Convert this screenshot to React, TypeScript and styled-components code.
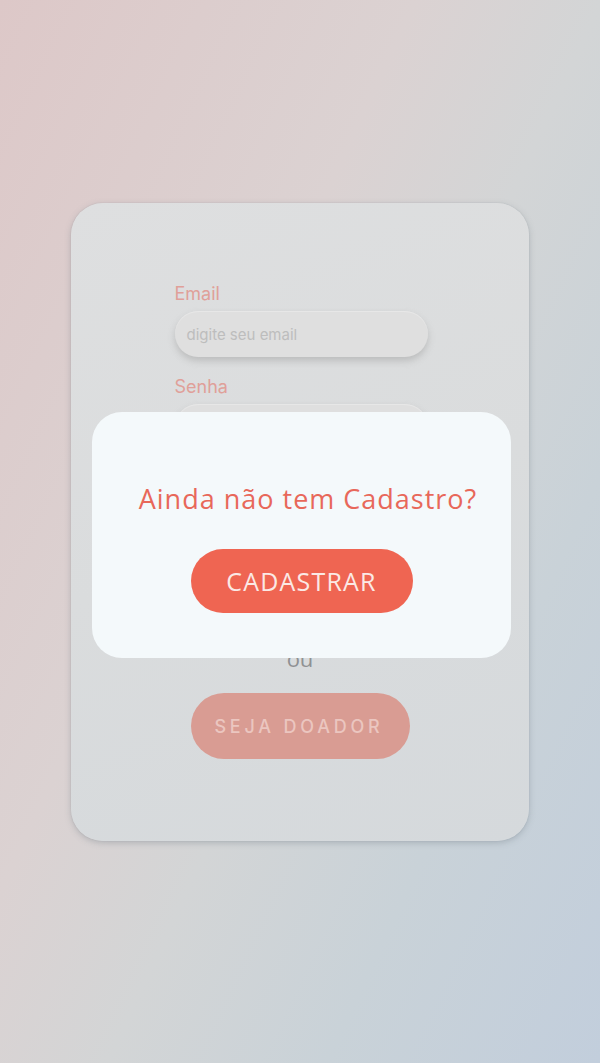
import React from "react";
import styled, { createGlobalStyle } from "styled-components";

const Global = createGlobalStyle`
  html, body { margin: 0; padding: 0; }
  body {
    width: 600px;
    height: 1063px;
    overflow: hidden;
    font-family: "Open Sans", "Lato", sans-serif;
  }
  * { box-sizing: border-box; }
`;

const Page = styled.div`
  position: relative;
  width: 600px;
  height: 1063px;
  background: linear-gradient(115deg, #ddc8c8 0%, #dbd2d2 38%, #d3d5d6 55%, #c9d2d8 75%, #c2cedc 100%);
  display: flex;
  flex-direction: column;
  align-items: center;
  padding-top: 203px;
`;

const Card = styled.div`
  width: 458px;
  height: 638px;
  border-radius: 32px;
  background: linear-gradient(160deg, #dedfe0 0%, #dadcdd 50%, #d5d9dc 100%);
  box-shadow: 0 2px 6px rgba(110, 120, 130, 0.35), 0 0 1px rgba(110, 120, 130, 0.4);
  display: flex;
  flex-direction: column;
  align-items: center;
  padding: 80px 0 0 2px;
`;

const Form = styled.form`
  width: 253px;
  display: flex;
  flex-direction: column;
`;

const Label = styled.label`
  font-family: "Inter", "Open Sans", sans-serif;
  font-size: 18px;
  line-height: 22px;
  color: #e0a099;
  margin-bottom: 6px;
`;

const Input = styled.div<{ $gap?: number }>`
  height: 46px;
  border-radius: 23px;
  background: #dfdfdf;
  box-shadow: 0 4px 7px rgba(150, 150, 150, 0.45), inset 0 1px 1px rgba(255,255,255,0.3);
  display: flex;
  align-items: center;
  padding: 0 12px;
  font-family: "Inter", "Open Sans", sans-serif;
  font-size: 15px;
  color: #bdbdbd;
  margin-bottom: ${(p) => p.$gap ?? 0}px;
`;

const Spacer = styled.div<{ $h: number }>`
  height: ${(p) => p.$h}px;
`;

const Or = styled.div`
  font-family: "Open Sans", sans-serif;
  font-size: 22px;
  line-height: 26px;
  color: #8f9193;
  text-align: center;
  margin-left: -2px;
`;

const DonorButton = styled.button`
  margin-top: 22px;
  margin-left: -2px;
  width: 219px;
  height: 66px;
  border: none;
  border-radius: 33px;
  background: #d99c93;
  color: #ebc6c0;
  font-family: "Inter", "Open Sans", sans-serif;
  font-size: 18px;
  font-weight: 500;
  letter-spacing: 3.8px;
  padding-left: 4px;
`;

const Modal = styled.div`
  position: absolute;
  top: 412px;
  left: 92px;
  width: 419px;
  height: 246px;
  border-radius: 30px;
  background: #f4f9fb;
  display: flex;
  flex-direction: column;
  align-items: center;
  padding-top: 69px;
`;

const Title = styled.h2`
  margin: 0 0 0 13px;
  font-family: "Open Sans", sans-serif;
  font-weight: 400;
  font-size: 27px;
  line-height: 36px;
  letter-spacing: 1px;
  color: #e8685a;
  white-space: nowrap;
`;

const PrimaryButton = styled.button`
  margin-top: 32px;
  width: 222px;
  height: 64px;
  border: none;
  border-radius: 32px;
  background: #ef6552;
  color: #fbe9e5;
  font-family: "Open Sans", sans-serif;
  font-size: 25px;
  font-weight: 400;
  letter-spacing: 1.2px;
`;

export default function App() {
  return (
    <>
      <Global />
      <Page>
        <Card>
          <Form>
            <Label>Email</Label>
            <Input $gap={19}>digite seu email</Input>
            <Label>Senha</Label>
            <Input />
          </Form>
          <Spacer $h={195} />
          <Or>ou</Or>
          <DonorButton type="button">SEJA DOADOR</DonorButton>
        </Card>
        <Modal>
          <Title>Ainda não tem Cadastro?</Title>
          <PrimaryButton type="button">CADASTRAR</PrimaryButton>
        </Modal>
      </Page>
    </>
  );
}
